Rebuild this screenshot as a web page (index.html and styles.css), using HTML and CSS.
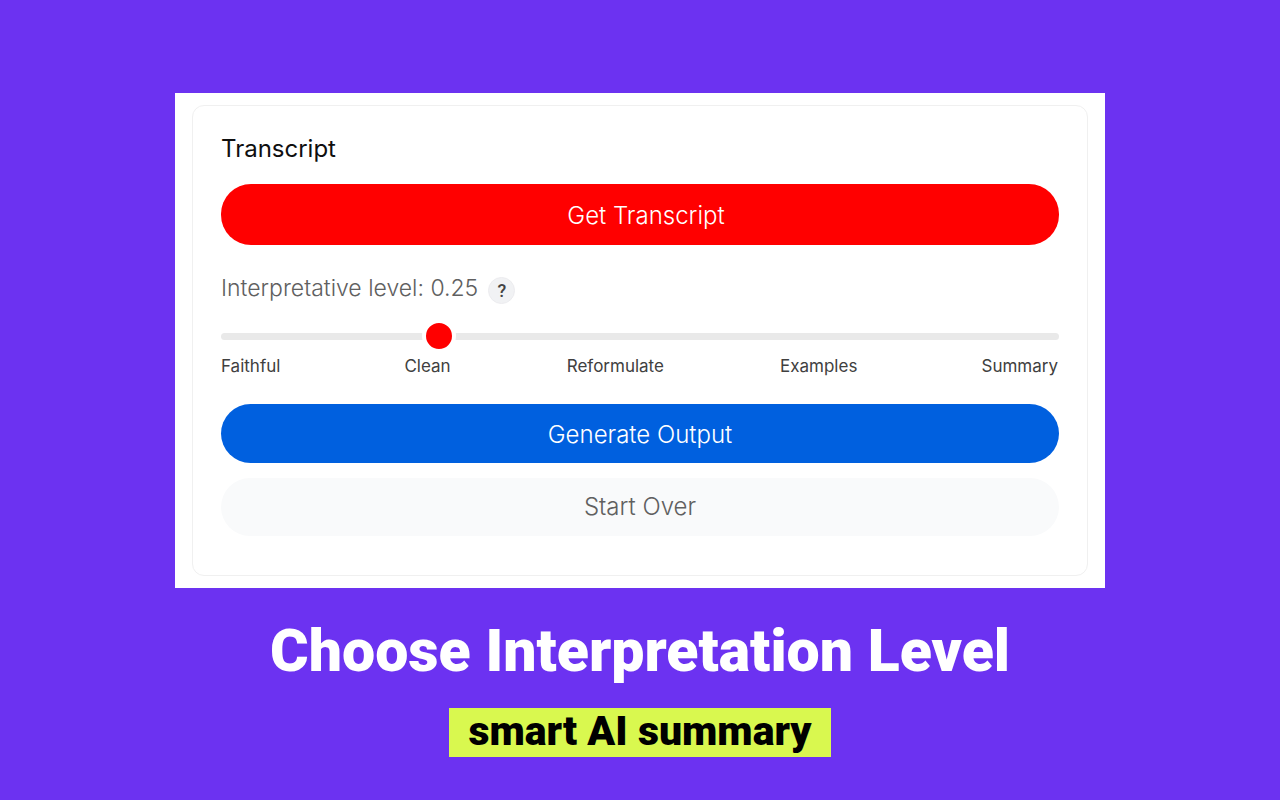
FILE: index.html
```html
<!DOCTYPE html>
<html lang="en">
<head>
<meta charset="utf-8">
<meta name="viewport" content="width=device-width, initial-scale=1">
<title>Choose Interpretation Level</title>
<link rel="stylesheet" href="styles.css">
</head>
<body>
<main class="page">
  <section class="sheet">
    <form class="panel">
      <h2 class="panel-title">Transcript</h2>
      <button class="btn btn-primary" type="button">Get Transcript</button>
      <div class="level-row">
        <label class="level-label" for="level">Interpretative level: 0.25</label>
        <button class="help" type="button" aria-label="Help">?</button>
      </div>
      <input class="slider" id="level" type="range" min="0" max="1" step="0.25" value="0.25">
      <div class="ticks">
        <span>Faithful</span>
        <span>Clean</span>
        <span>Reformulate</span>
        <span>Examples</span>
        <span>Summary</span>
      </div>
      <button class="btn btn-generate" type="button">Generate Output</button>
      <button class="btn btn-reset" type="button">Start Over</button>
    </form>
  </section>
  <h1 class="headline">Choose Interpretation Level</h1>
  <p class="tagline">smart AI summary</p>
</main>
</body>
</html>
```
FILE: styles.css
```css
* {
  box-sizing: border-box;
}

body {
  margin: 0;
  min-height: 100vh;
  background: #6c32f1;
  font-family: Inter, "Liberation Sans", sans-serif;
}

.page {
  display: flex;
  flex-direction: column;
  align-items: center;
  padding: 93px 24px 40px;
}

.sheet {
  width: 100%;
  max-width: 930px;
  padding: 12px 17px;
  background: #fff;
}

.panel {
  display: flex;
  flex-direction: column;
  padding: 27px 28px 39px;
  border: 1px solid #f0f0f0;
  border-radius: 12px;
}

.panel-title {
  margin: 0 0 19px;
  color: #0f0f0f;
  font-size: 24px;
  font-weight: 400;
  line-height: 32px;
}

.btn {
  width: 100%;
  border: 0;
  border-radius: 30px;
  font-family: inherit;
  font-size: 24px;
  font-weight: 300;
  line-height: 32px;
  cursor: pointer;
}

.btn-primary {
  padding: 16px 0 13px 12px;
  background: #f00;
  color: #fff;
}

.level-row {
  display: flex;
  align-items: center;
  gap: 10px;
  margin-top: 26px;
}

.level-label {
  color: #606060;
  font-size: 23px;
  font-weight: 300;
  line-height: 32px;
}

.help {
  width: 27px;
  height: 27px;
  margin-top: 6px;
  padding: 0;
  border: 1px solid #ececef;
  border-radius: 50%;
  background: #f1f2f4;
  color: #444;
  font: 500 18px/24px Roboto, sans-serif;
}

.slider {
  width: 100%;
  height: 34px;
  margin: 15px 0 0;
  appearance: none;
  background: transparent;
}

.slider::-webkit-slider-runnable-track {
  height: 7px;
  border-radius: 4px;
  background: #e9e9e9;
}

.slider::-webkit-slider-thumb {
  width: 34px;
  height: 34px;
  margin-top: -14px;
  appearance: none;
  border: 4px solid #fff;
  border-radius: 50%;
  background: #f00;
}

.ticks {
  display: flex;
  justify-content: space-between;
  padding: 1px 1px 0 0;
  color: #404040;
  font-size: 17px;
  font-weight: 400;
  line-height: 24px;
}

.ticks span:first-child {
  margin-right: 8px;
}

.ticks span:last-child {
  margin-left: 8px;
}

.btn-generate {
  margin-top: 26px;
  padding: 15px 0 12px;
  background: #0060df;
  color: #fff;
}

.btn-reset {
  margin-top: 15px;
  padding: 13px 0;
  background: #f9fafb;
  color: #606060;
}

.headline {
  margin: 28px 0 0;
  color: #fff;
  font-family: Roboto, sans-serif;
  font-size: 59px;
  font-weight: 900;
  line-height: 70px;
  text-align: center;
}

.tagline {
  margin: 22px 0 0;
  padding: 0 19px 2px;
  background: #d9f84f;
  color: #000;
  font-family: Roboto, sans-serif;
  font-size: 41px;
  font-weight: 900;
  line-height: 47px;
  text-align: center;
}
```
